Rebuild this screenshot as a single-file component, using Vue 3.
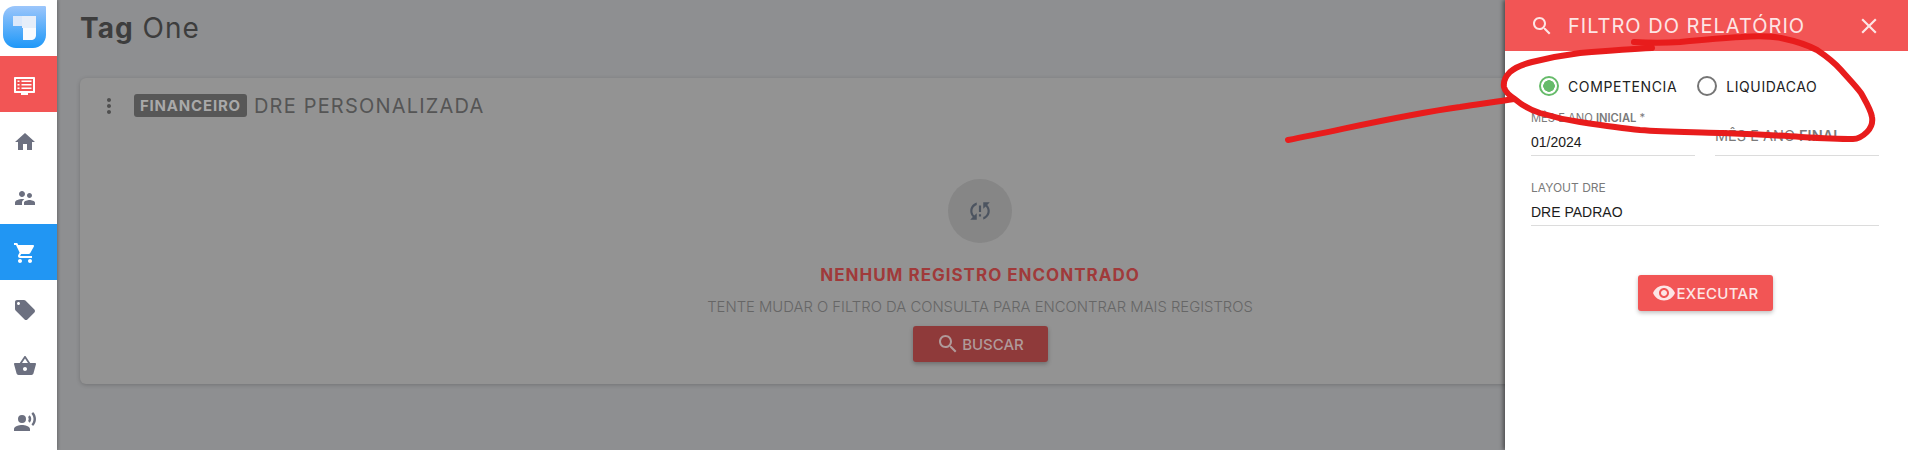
<script setup>
const paths = {
  home: 'M10 20v-6h4v6h5v-8h3L12 3 2 12h3v8z',
  people: 'M16.5 12c1.38 0 2.49-1.12 2.49-2.5S17.88 7 16.5 7C15.12 7 14 8.12 14 9.5s1.12 2.5 2.5 2.5zM9 11c1.66 0 2.99-1.34 2.99-3S10.66 5 9 5C7.34 5 6 6.34 6 8s1.34 3 3 3zm7.5 3c-1.83 0-5.5.92-5.5 2.75V19h11v-2.25c0-1.83-3.67-2.75-5.5-2.75zM9 13c-2.33 0-7 1.17-7 3.5V19h7v-2.25c0-.85.33-2.34 2.37-3.47C10.5 13.1 9.66 13 9 13z',
  cart: 'M7 18c-1.1 0-1.99.9-1.99 2S5.9 22 7 22s2-.9 2-2-.9-2-2-2zM1 2v2h2l3.6 7.59-1.35 2.45c-.16.28-.25.61-.25.96 0 1.1.9 2 2 2h12v-2H7.42c-.14 0-.25-.11-.25-.25l.03-.12.9-1.63h7.45c.75 0 1.41-.41 1.75-1.03l3.58-6.49c.08-.14.12-.31.12-.48 0-.55-.45-1-1-1H5.21l-.94-2H1zm16 16c-1.1 0-1.99.9-1.99 2s.89 2 1.99 2 2-.9 2-2-.9-2-2-2z',
  tag: 'M21.41 11.58l-9-9C12.05 2.22 11.55 2 11 2H4c-1.1 0-2 .9-2 2v7c0 .55.22 1.05.59 1.42l9 9c.36.36.86.58 1.41.58.55 0 1.05-.22 1.41-.59l7-7c.37-.36.59-.86.59-1.41 0-.55-.23-1.06-.59-1.42zM5.5 7C4.67 7 4 6.33 4 5.5S4.67 4 5.5 4 7 4.67 7 5.5 6.33 7 5.5 7z',
  basket: 'M17.21 9l-4.38-6.56c-.19-.28-.51-.42-.83-.42-.32 0-.64.14-.83.43L6.79 9H2c-.55 0-1 .45-1 1 0 .09.01.18.04.27l2.54 9.27c.23.84 1 1.46 1.92 1.46h13c.92 0 1.69-.62 1.93-1.46l2.54-9.27L23 10c0-.55-.45-1-1-1h-4.79zM9 9l3-4.4L15 9H9zm3 8c-1.1 0-2-.9-2-2s.9-2 2-2 2 .9 2 2-.9 2-2 2z',
  voice: 'M13 9a4 4 0 1 1-8 0 4 4 0 0 1 8 0zM9 15c-2.67 0-8 1.34-8 4v2h16v-2c0-2.66-5.33-4-8-4zm7.76-9.64l-1.68 1.69c.84 1.18.84 2.71 0 3.89l1.68 1.69c2.02-2.02 2.02-5.07 0-7.27zM20.07 2l-1.63 1.63c2.77 3.02 2.77 7.56 0 10.74L20.07 16c3.9-3.89 3.91-9.95 0-14z',
  search: 'M15.5 14h-.79l-.28-.27C15.41 12.59 16 11.11 16 9.5 16 5.91 13.09 3 9.5 3S3 5.91 3 9.5 5.91 16 9.5 16c1.61 0 3.09-.59 4.23-1.57l.27.28v.79l5 4.99L20.49 19l-4.99-5zm-6 0C7.01 14 5 11.99 5 9.5S7.01 5 9.5 5 14 7.01 14 9.5 11.99 14 9.5 14z',
  close: 'M19 6.41L17.59 5 12 10.59 6.41 5 5 6.41 10.59 12 5 17.59 6.41 19 12 13.41 17.59 19 19 17.59 13.41 12z',
  more: 'M12 8c1.1 0 2-.9 2-2s-.9-2-2-2-2 .9-2 2 .9 2 2 2zm0 2c-1.1 0-2 .9-2 2s.9 2 2 2 2-.9 2-2-.9-2-2-2zm0 6c-1.1 0-2 .9-2 2s.9 2 2 2 2-.9 2-2-.9-2-2-2z',
  sync: 'M3 12c0 2.21.91 4.2 2.36 5.64L3 20h6v-6l-2.24 2.24C5.68 15.15 5 13.66 5 12c0-2.61 1.67-4.83 4-5.65V4.26C5.55 5.15 3 8.27 3 12zm8 5h2v-2h-2v2zM21 4h-6v6l2.24-2.24C18.32 8.85 19 10.34 19 12c0 2.61-1.67 4.83-4 5.65v2.09c3.45-.89 6-4.01 6-7.74 0-2.21-.91-4.2-2.36-5.64L21 4zm-10 9h2V7h-2v6z',
  eye: 'M12 4.5C7 4.5 2.73 7.61 1 12c1.73 4.39 6 7.5 11 7.5s9.27-3.11 11-7.5c-1.73-4.39-6-7.5-11-7.5zM12 17c-2.76 0-5-2.24-5-5s2.24-5 5-5 5 2.24 5 5-2.24 5-5 5zm0-8c-1.66 0-3 1.34-3 3s1.34 3 3 3 3-1.34 3-3-1.34-3-3-3z'
}

const menu = [
  { icon: 'home' },
  { icon: 'people' },
  { icon: 'cart', active: true },
  { icon: 'tag' },
  { icon: 'basket' },
  { icon: 'voice' }
]

const ring = 'M1634 42 C1650 43 1665 43 1680 42 C1700 40 1720 38 1741 37 C1755 36 1770 36 1781 38 C1795 41 1806 44 1817 50 C1826 56 1834 62 1841 70 C1848 78 1855 85 1861 93 C1866 102 1871 110 1872 117 C1873 123 1871 128 1867 132 C1863 136 1858 139 1853 139 C1835 139 1818 138 1801 137 C1775 135 1747 134 1720 133 C1693 132 1666 132 1640 130 C1620 128 1600 125 1580 122 C1566 120 1553 117 1540 113 C1531 110 1523 106 1516 100 C1510 96 1505 92 1504 87 C1503 81 1506 76 1510 72 C1516 67 1524 64 1532 62 C1548 58 1564 55 1580 53 C1604 51 1628 49 1652 48'
const line = 'M1288 140 C1345 129 1402 115 1460 107 C1478 104 1496 102 1514 99'
</script>

<template>
  <div class="app">
    <aside class="sidebar">
      <div class="logo">
        <svg width="44" height="44" viewBox="0 0 44 44">
          <defs>
            <linearGradient id="logoGrad" x1="0" y1="0" x2="0" y2="1">
              <stop offset="0" stop-color="#9cc6fb" />
              <stop offset="1" stop-color="#1e98f8" />
            </linearGradient>
          </defs>
          <path d="M12 1H42C43 1 43 2 43 3V30C43 37 37 43 30 43H13C6 43 0 37 0 30V13C0 6 5 1 12 1Z" fill="url(#logoGrad)" />
          <path d="M10 11H19V21H10Z" fill="#dbe8fa" />
          <path d="M19 11H33V23H19Z" fill="#e6eef9" />
          <path d="M20 23H33V30C33 33 31 35 28 35H20Z" fill="#f9fbfe" />
        </svg>
      </div>
      <div class="menu-item report">
        <svg width="24" height="24" viewBox="0 0 24 24">
          <path d="M2 5H21C21.6 5 22 5.4 22 6V20C22 20.6 21.6 21 21 21H2C1.4 21 1 20.6 1 20V6C1 5.4 1.4 5 2 5ZM3 7V19H20V7Z" fill="#fff" fill-rule="evenodd" />
          <path d="M8 21H15V23H8ZM4.5 8.5H6.5V10H4.5ZM8.5 8.5H18.5V10H8.5ZM4.5 12H6.5V13.5H4.5ZM8.5 12H18.5V13.5H8.5ZM4.5 15.5H6.5V17H4.5ZM8.5 15.5H18.5V17H8.5Z" fill="#fff" />
        </svg>
      </div>
      <div v-for="item in menu" :key="item.icon" class="menu-item" :class="{ active: item.active }">
        <svg width="24" height="24" viewBox="0 0 24 24"><path :d="paths[item.icon]" /></svg>
      </div>
    </aside>

    <main class="content">
      <h1 class="page-title"><b>Tag</b> One</h1>
      <section class="card">
        <div class="card-head">
          <svg class="more" width="24" height="24" viewBox="0 0 24 24"><path :d="paths.more" /></svg>
          <span class="badge">FINANCEIRO</span>
          <span class="card-title">DRE PERSONALIZADA</span>
        </div>
        <div class="empty">
          <div class="empty-icon">
            <svg width="26" height="26" viewBox="0 0 24 24"><path :d="paths.sync" /></svg>
          </div>
          <h3>NENHUM REGISTRO ENCONTRADO</h3>
          <p>TENTE MUDAR O FILTRO DA CONSULTA PARA ENCONTRAR MAIS REGISTROS</p>
          <button class="search-btn">
            <svg width="24" height="24" viewBox="0 0 24 24"><path :d="paths.search" /></svg>
            BUSCAR
          </button>
        </div>
      </section>
    </main>

    <aside class="drawer">
      <header class="drawer-head">
        <svg width="24" height="24" viewBox="0 0 24 24"><path :d="paths.search" /></svg>
        <span class="drawer-title">FILTRO DO RELATÓRIO</span>
        <svg class="close" width="26" height="26" viewBox="0 0 24 24"><path :d="paths.close" /></svg>
      </header>
      <div class="drawer-body">
        <div class="radios">
          <label class="radio on"><i></i>COMPETENCIA</label>
          <label class="radio"><i></i>LIQUIDACAO</label>
        </div>
        <div class="dates">
          <div class="field">
            <span class="field-label">MÊS E ANO <b>INICIAL</b> *</span>
            <span class="field-value">01/2024</span>
          </div>
          <div class="field resting">
            <span class="field-label">MÊS E ANO <b>FINAL</b></span>
          </div>
        </div>
        <div class="field layout">
          <span class="field-label">LAYOUT DRE</span>
          <span class="field-value">DRE PADRAO</span>
        </div>
        <button class="run-btn">
          <svg width="24" height="24" viewBox="0 0 24 24"><path :d="paths.eye" /></svg>
          EXECUTAR
        </button>
      </div>
    </aside>

    <svg class="scribble" width="1908" height="450" viewBox="0 0 1908 450">
      <path :d="ring" />
      <path :d="line" />
    </svg>
  </div>
</template>

<style>
html, body { margin: 0; height: 450px; overflow: hidden; }
</style>

<style scoped>
.app {
  position: relative;
  display: flex;
  width: 1908px;
  height: 450px;
  overflow: hidden;
  background: #8e8f91;
  font-family: Inter, "Open Sans", sans-serif;
}

/* SIDEBAR */
.sidebar {
  width: 57px;
  flex: none;
  background: #fff;
  box-shadow: 1px 0 3px rgba(0,0,0,0.25);
}
.logo { height: 56px; padding: 5px 0 0 3px; box-sizing: border-box; }
.logo svg { display: block; }
.menu-item {
  height: 56px;
  box-sizing: border-box;
  padding: 4px 0 0 13px;
  display: flex;
  align-items: center;
  fill: #6c7080;
}
.menu-item.report { background: #f25555; padding-top: 0; }
.menu-item.active { background: #2196f3; fill: #fff; padding-top: 2px; }

/* MAIN */
.content { flex: 1; padding: 0 28px 0 23px; }
.page-title {
  margin: 0;
  height: 78px;
  padding-top: 13px;
  box-sizing: border-box;
  font-size: 28px;
  line-height: 30px;
  font-weight: 400;
  letter-spacing: 1px;
  color: #3d3d3d;
}
.page-title b { font-weight: 700; }
.card {
  height: 306px;
  background: #939393;
  border-radius: 6px;
  box-shadow: 0 1px 4px rgba(0,0,0,0.2);
}
.card-head {
  height: 56px;
  padding: 16px 0 0 17px;
  box-sizing: border-box;
  display: flex;
  align-items: flex-start;
}
.more { fill: #4f4f4f; margin-right: 13px; }
.badge {
  height: 23px;
  margin-right: 7px;
  padding: 0 6px;
  border-radius: 3px;
  background: #575757;
  color: #a9a9a9;
  font-size: 15px;
  font-weight: 700;
  line-height: 23px;
  letter-spacing: 0.8px;
}
.card-title { font-size: 20px; line-height: 24px; color: #555; letter-spacing: 1.2px; }
.empty {
  display: flex;
  flex-direction: column;
  align-items: center;
  padding-top: 45px;
}
.empty-icon {
  width: 64px;
  height: 64px;
  border-radius: 50%;
  background: #868686;
  display: flex;
  align-items: center;
  justify-content: center;
  fill: #4c5460;
}
.empty h3 {
  margin: 21px 0 0;
  font-size: 17px;
  line-height: 22px;
  font-weight: 700;
  letter-spacing: 1px;
  color: #a03a3a;
}
.empty p {
  margin: 11px 0 0;
  font-size: 14.8px;
  line-height: 20px;
  font-weight: 300;
  color: #666;
}
.search-btn {
  margin-top: 9px;
  width: 135px;
  height: 36px;
  border: 0;
  border-radius: 3px;
  background: #8f3a3a;
  color: #b09a9a;
  fill: #b09a9a;
  font: 500 15px Inter, sans-serif;
  display: flex;
  align-items: center;
  justify-content: center;
  gap: 2px;
  box-shadow: 0 2px 4px rgba(0,0,0,0.25);
}

/* DRAWER */
.drawer {
  position: absolute;
  top: 0;
  right: 0;
  bottom: 0;
  width: 403px;
  background: #fff;
  box-shadow: -2px 0 4px rgba(0,0,0,0.45);
}
.drawer-head {
  height: 51px;
  padding: 0 26px 0 25px;
  display: flex;
  align-items: center;
  background: #f25555;
  color: #fde5e5;
  fill: #fde5e5;
}
.drawer-title { margin-left: 14px; font-size: 20px; letter-spacing: 1px; flex: 1; }
.drawer-body { padding: 23px 29px 0 26px; }
.radios { display: flex; gap: 20px; padding-left: 8px; height: 24px; }
.radio {
  display: flex;
  align-items: center;
  font-size: 14px;
  letter-spacing: 0.6px;
  color: #222;
}
.radio i {
  width: 20px;
  height: 20px;
  margin-right: 9px;
  box-sizing: border-box;
  border: 2px solid #757575;
  border-radius: 50%;
}
.radio.on i {
  border-color: #66bb6a;
  background: radial-gradient(circle, #66bb6a 0 5.5px, transparent 6px);
}
.dates { display: grid; grid-template-columns: 1fr 1fr; gap: 20px; margin-top: 13px; }
.field {
  height: 45px;
  box-sizing: border-box;
  display: flex;
  flex-direction: column;
  border-bottom: 1px solid #dcdcdc;
}
.field-label { font-size: 11.2px; line-height: 14px; color: #7a7a7a; }
.field-label b { font-weight: 600; }
.field-value {
  margin-top: 8px;
  font-family: "Liberation Sans", Arial, sans-serif;
  font-size: 14px;
  line-height: 18px;
  color: #1c1c1c;
}
.field.resting { justify-content: flex-end; padding-bottom: 12px; }
.field.resting .field-label { font-size: 14.5px; }
.layout { margin-top: 25px; }
.layout .field-label { font-size: 12px; }
.run-btn {
  margin: 49px auto 0;
  width: 135px;
  height: 36px;
  border: 0;
  border-radius: 3px;
  background: #f25555;
  color: #fde5e5;
  fill: #fde5e5;
  font: 500 15px Inter, sans-serif;
  letter-spacing: 0.3px;
  display: flex;
  align-items: center;
  justify-content: center;
  gap: 1px;
  box-shadow: 0 2px 4px rgba(0,0,0,0.25);
}

/* HAND DRAWN MARK ON TOP OF THE SCREENSHOT */
.scribble { position: absolute; left: 0; top: 0; pointer-events: none; }
.scribble path {
  fill: none;
  stroke: #e81c1c;
  stroke-width: 6;
  stroke-linecap: round;
  stroke-linejoin: round;
}
</style>
